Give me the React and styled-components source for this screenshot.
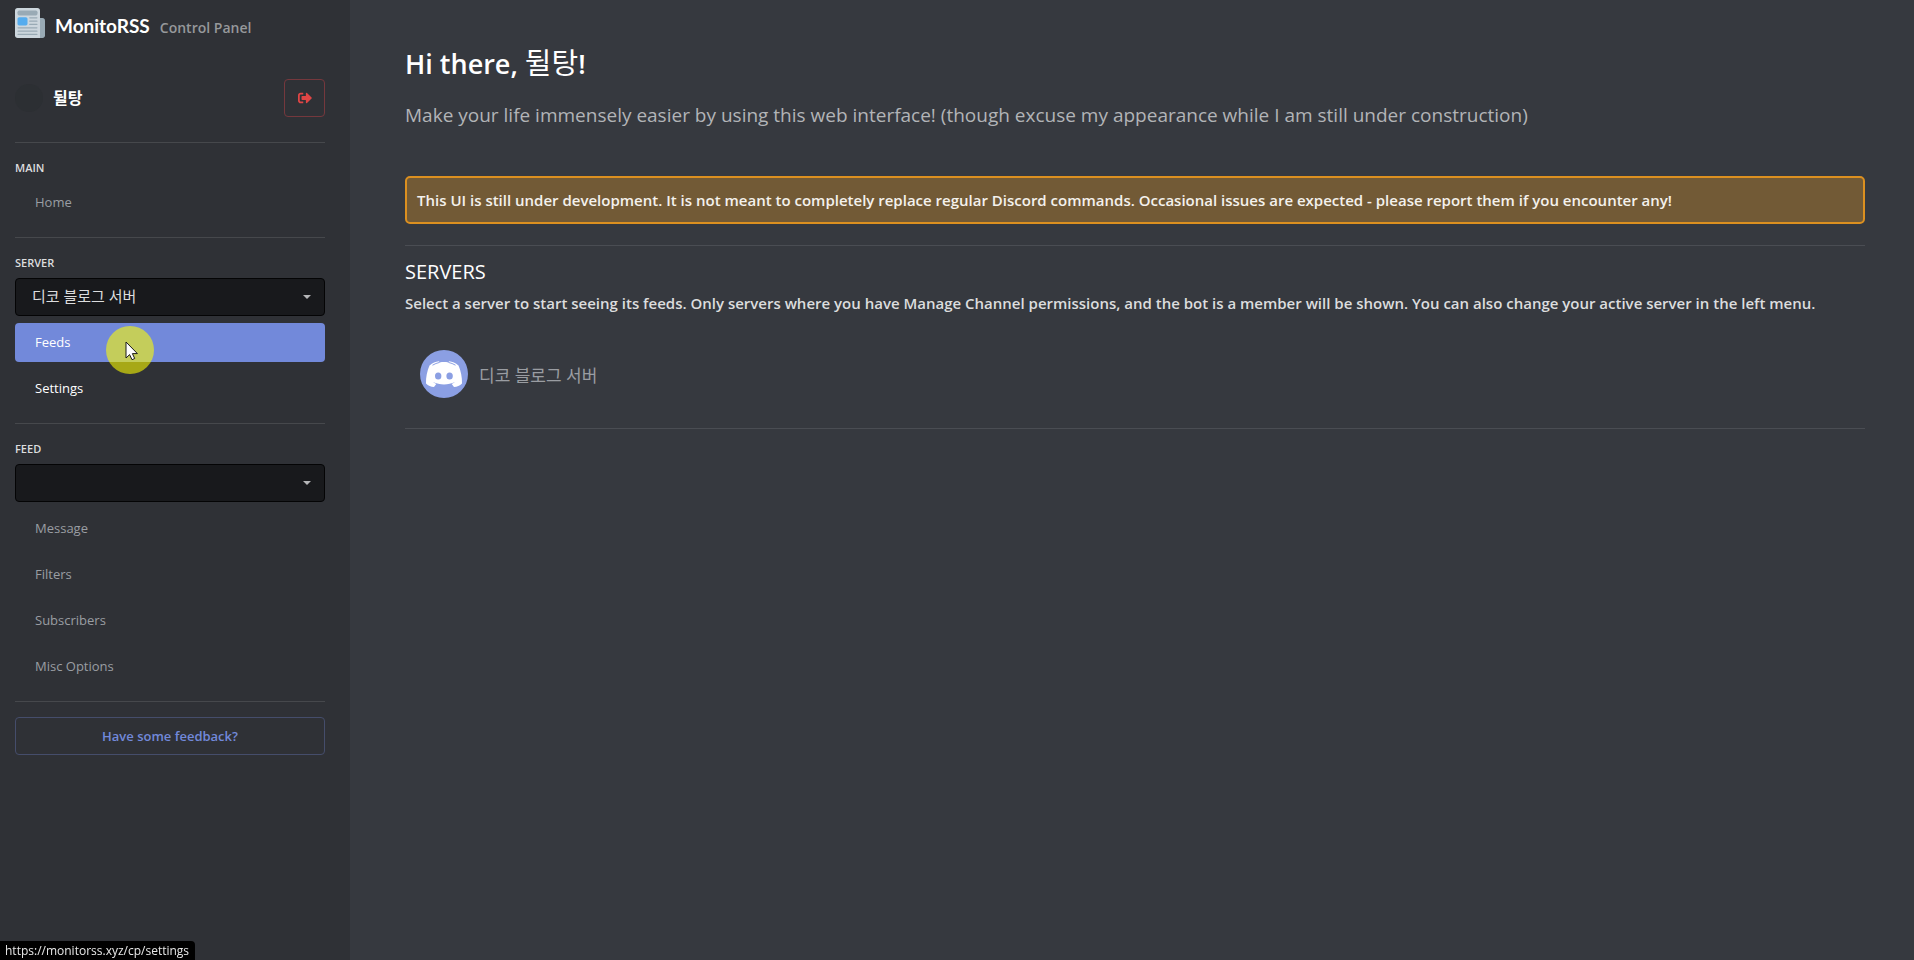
import React from "react"
import styled, { createGlobalStyle } from "styled-components"
import { FaSignOutAlt } from "react-icons/fa"

const GlobalStyle = createGlobalStyle`
  * {
    box-sizing: border-box;
  }
  body {
    margin: 0;
    background: #36393f;
    color: #dcddde;
    font-family: "Open Sans", "Noto Sans CJK KR", sans-serif;
    font-size: 15px;
  }
  h1, h2, h3, p, ul {
    margin: 0;
    padding: 0;
  }
  button, select {
    font-family: inherit;
  }
`

const Page = styled.div`
  display: flex;
  min-height: 100vh;
`

const Sidebar = styled.aside`
  flex: 0 0 350px;
  padding: 8px 25px 24px 15px;
  background: #2f3136;
`

const Brand = styled.header`
  display: flex;
  align-items: center;
  gap: 10px;
  height: 30px;
  margin-bottom: 41px;
`

const BrandText = styled.div`
  display: flex;
  align-items: baseline;
  gap: 10px;
  padding-top: 4px;
`

const BrandName = styled.span`
  color: #fff;
  font-family: Lato, sans-serif;
  font-size: 19px;
  font-weight: 700;
`

const BrandNote = styled.span`
  color: #96989b;
  font-size: 14px;
  font-weight: 600;
`

const User = styled.div`
  display: flex;
  align-items: center;
  height: 38px;
  margin-bottom: 25px;
`

const UserAvatar = styled.span`
  width: 28px;
  height: 28px;
  margin-right: 10px;
  border-radius: 50%;
  background: #2c2f33;
`

const UserName = styled.span`
  flex: 1;
  padding-bottom: 2px;
  color: #fff;
  font-size: 16px;
  font-weight: 600;
`

const LogoutButton = styled.button`
  display: flex;
  align-items: center;
  justify-content: center;
  width: 41px;
  height: 38px;
  border: 1px solid #75383d;
  border-radius: 4px;
  background: transparent;
  color: #e04545;
  font-size: 14px;
`

const Section = styled.section`
  padding: 15px 0;
  border-top: 1px solid #46484c;
`

const SectionLabel = styled.label`
  display: block;
  margin-bottom: 5px;
  color: #dcddde;
  font-size: 11px;
  font-weight: 600;
  line-height: 20px;
  text-transform: uppercase;
`

const SelectBox = styled.div`
  display: grid;
  align-items: center;
  margin-bottom: 7px;
  select,
  svg {
    grid-area: 1 / 1;
  }
  svg {
    justify-self: end;
    margin-right: 14px;
    pointer-events: none;
  }
`

const Select = styled.select`
  appearance: none;
  width: 100%;
  height: 38px;
  padding: 0 36px 2px 16px;
  border: 1px solid #040405;
  border-radius: 4px;
  background: #18191c;
  color: #dcddde;
  font-size: 15px;
`

const Menu = styled.nav`
  display: flex;
  flex-direction: column;
  gap: 7px;
`

const linkColor = ({ $active, $enabled }) =>
  $active || $enabled ? "#fff" : "#9a9ea3"

const MenuLink = styled.a`
  position: relative;
  padding: 0 20px;
  border-radius: 4px;
  background: ${({ $active }) => ($active ? "#7289da" : "transparent")};
  color: ${linkColor};
  font-size: 13px;
  line-height: 39px;
  text-decoration: none;
`

const PointerHalo = styled.span`
  position: absolute;
  top: 3px;
  left: 91px;
  z-index: 1;
  width: 48px;
  height: 48px;
  border-radius: 50%;
  background: rgba(255, 255, 0, 0.58);
  pointer-events: none;
  svg {
    position: absolute;
    top: 15px;
    left: 19px;
  }
`

const FeedbackButton = styled.button`
  width: 100%;
  height: 38px;
  border: 1px solid #454d6b;
  border-radius: 4px;
  background: transparent;
  color: #7289da;
  font-size: 13px;
  font-weight: 600;
`

const Main = styled.main`
  flex: 1;
  min-width: 0;
  padding: 44px 49px 44px 55px;
`

const Greeting = styled.h1`
  color: #fff;
  font-size: 27px;
  font-weight: 600;
  line-height: 40px;
  span {
    font-size: 29px;
    font-weight: 400;
    line-height: 1;
  }
`

const Intro = styled.p`
  margin-top: 16px;
  color: #b2b4b7;
  font-size: 19px;
  line-height: 30px;
`

const Notice = styled.p`
  margin: 46px 0 21px;
  padding: 10px;
  border: 2px solid #dc9020;
  border-radius: 5px;
  background: #725a36;
  color: #f4f1ec;
  font-weight: 600;
  line-height: 24px;
`

const Servers = styled.section`
  padding: 13px 0 30px;
  border-top: 1px solid #4a4d53;
  border-bottom: 1px solid #4a4d53;
`

const ServersTitle = styled.h2`
  color: #fff;
  font-size: 20px;
  font-weight: 400;
  line-height: 26px;
  text-transform: uppercase;
`

const ServersHint = styled.p`
  margin-top: 6px;
  color: #dcddde;
  font-weight: 600;
  line-height: 24px;
`

const ServerList = styled.ul`
  margin-top: 35px;
  padding: 0 15px;
  list-style: none;
`

const ServerLink = styled.a`
  display: flex;
  align-items: center;
  gap: 11px;
  color: #9a9da2;
  font-size: 17px;
  text-decoration: none;
`

const StatusBar = styled.div`
  position: fixed;
  bottom: 0;
  left: 0;
  padding: 0 6px 0 5px;
  border-top-right-radius: 4px;
  background: #000;
  color: #e8e8e8;
  font-size: 12px;
  line-height: 19px;
`

const NewspaperIcon = () => (
  <svg width="30" height="30" viewBox="0 0 36 36" aria-hidden="true">
    <path fill="#99aab5" d="M33 12H20v24h13c1.700 0 3-1.300 3-3V15c0-1.700-1.300-3-3-3z" />
    <path fill="#ccd6dd" d="M27 0H3C1.300 0 0 1.300 0 3v30c0 1.700 1.300 3 3 3h27V3c0-1.700-1.300-3-3-3z" />
    <rect x="3" y="3" width="24" height="6" rx="2" fill="#99aab5" />
    <rect x="3" y="11" width="12" height="10" rx="2" fill="#55acee" />
    <g fill="#99aab5">
      <rect x="17" y="11" width="10" height="1.500" rx=".7" />
      <rect x="17" y="15" width="10" height="1.500" rx=".7" />
      <rect x="17" y="19" width="10" height="1.500" rx=".7" />
      <rect x="3" y="23" width="24" height="1.500" rx=".7" />
      <rect x="3" y="27" width="24" height="1.500" rx=".7" />
      <rect x="3" y="31" width="24" height="1.500" rx=".7" />
    </g>
  </svg>
)

const CaretIcon = () => (
  <svg width="8" height="4" viewBox="0 0 8 4" aria-hidden="true">
    <path fill="#b5b6b8" d="M0 0h8L4 4z" />
  </svg>
)

const CursorIcon = () => (
  <svg width="14" height="20" viewBox="0 0 14 20" aria-hidden="true">
    <path
      fill="#fff"
      stroke="#1a1a1a"
      strokeLinejoin="round"
      d="M1 1v16l3.600-3.400 2.400 5.100 2.700-1.200-2.300-4.900h5z"
    />
  </svg>
)

const DiscordIcon = () => (
  <svg width="48" height="48" viewBox="0 0 48 48" aria-hidden="true">
    <circle cx="24" cy="24" r="24" fill="#8b9fe3" />
    <path
      fill="#fff"
      d="M9.500 15.500C12.500 12.800 15.500 11.600 19 11.200l.6 1.200c3-.5 5.800-.5 8.800 0l.6-1.200c3.500.4 6.500 1.600 9.500 4.300 2.400 5.500 3.700 11.500 3.500 18-2.100 2.200-4.900 3.400-8 3.500l-2.300-3.100c1.300-.4 2.400-1 3.400-1.800-6.800 3.100-15.400 3.100-22.200 0 1 .8 2.100 1.400 3.400 1.800L14 37c-3.100-.1-5.900-1.300-8-3.500-.2-6.500 1.100-12.500 3.500-18z"
    />
    <path
      fill="none"
      stroke="#8b9fe3"
      strokeWidth="1"
      d="M12.500 15.200c2.200-1.400 4.600-2.200 7.100-2.800M35.500 15.200c-2.200-1.400-4.600-2.200-7.100-2.800"
    />
    <ellipse cx="18.200" cy="26" rx="3.200" ry="3.500" fill="#8b9fe3" />
    <ellipse cx="29.600" cy="26" rx="3.200" ry="3.500" fill="#8b9fe3" />
  </svg>
)

const feedPages = ["Message", "Filters", "Subscribers", "Misc Options"]

const App = () => {
  return (
    <>
      <GlobalStyle />
      <Page>
        <Sidebar>
          <Brand>
            <NewspaperIcon />
            <BrandText>
              <BrandName>MonitoRSS</BrandName>
              <BrandNote>Control Panel</BrandNote>
            </BrandText>
          </Brand>
          <User>
            <UserAvatar />
            <UserName>뒬탕</UserName>
            <LogoutButton type="button" aria-label="Log out">
              <FaSignOutAlt />
            </LogoutButton>
          </User>
          <Section>
            <SectionLabel as="h3">Main</SectionLabel>
            <Menu>
              <MenuLink href="#home">Home</MenuLink>
            </Menu>
          </Section>
          <Section>
            <SectionLabel htmlFor="server">Server</SectionLabel>
            <SelectBox>
              <Select id="server">
                <option>디코 블로그 서버</option>
              </Select>
              <CaretIcon />
            </SelectBox>
            <Menu>
              <MenuLink href="#feeds" $active>
                Feeds
                <PointerHalo>
                  <CursorIcon />
                </PointerHalo>
              </MenuLink>
              <MenuLink href="#settings" $enabled>
                Settings
              </MenuLink>
            </Menu>
          </Section>
          <Section>
            <SectionLabel htmlFor="feed">Feed</SectionLabel>
            <SelectBox>
              <Select id="feed" />
              <CaretIcon />
            </SelectBox>
            <Menu>
              {feedPages.map((page) => (
                <MenuLink key={page} href="#feed">
                  {page}
                </MenuLink>
              ))}
            </Menu>
          </Section>
          <Section>
            <FeedbackButton type="button">Have some feedback?</FeedbackButton>
          </Section>
        </Sidebar>
        <Main>
          <Greeting>
            Hi there, <span>뒬탕</span>!
          </Greeting>
          <Intro>
            Make your life immensely easier by using this web interface! (though
            excuse my appearance while I am still under construction)
          </Intro>
          <Notice>
            This UI is still under development. It is not meant to completely
            replace regular Discord commands. Occasional issues are expected -
            please report them if you encounter any!
          </Notice>
          <Servers>
            <ServersTitle>Servers</ServersTitle>
            <ServersHint>
              Select a server to start seeing its feeds. Only servers where you
              have Manage Channel permissions, and the bot is a member will be
              shown. You can also change your active server in the left menu.
            </ServersHint>
            <ServerList>
              <li>
                <ServerLink href="#server">
                  <DiscordIcon />
                  디코 블로그 서버
                </ServerLink>
              </li>
            </ServerList>
          </Servers>
        </Main>
      </Page>
      <StatusBar>https://monitorss.xyz/cp/settings</StatusBar>
    </>
  )
}

export default App
